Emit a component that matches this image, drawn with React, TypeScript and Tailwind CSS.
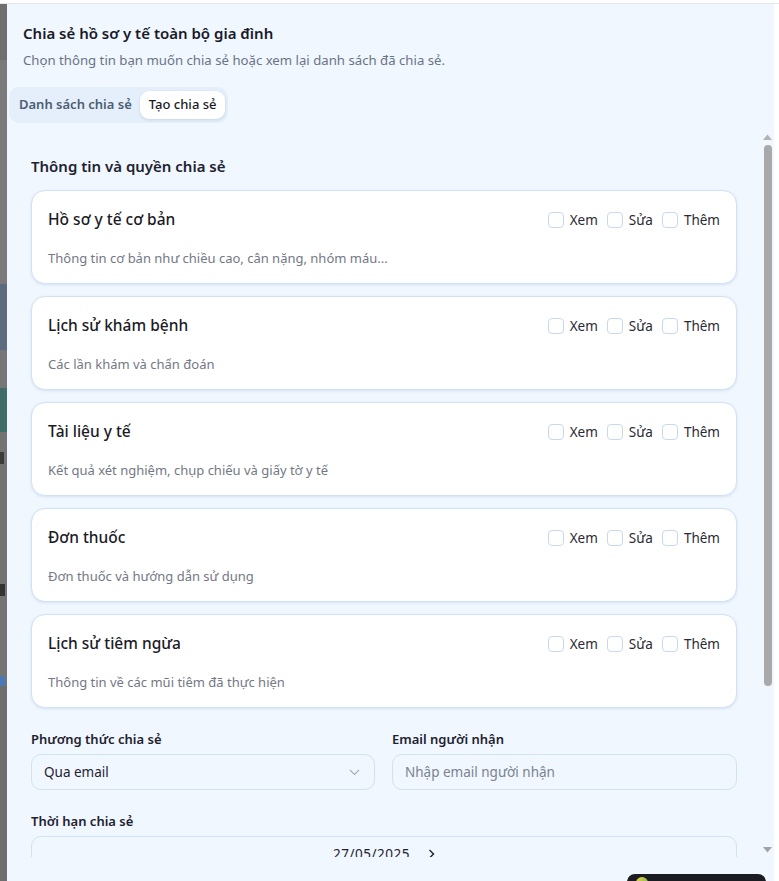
import React from 'react';

const sections = [
  { title: 'Hồ sơ y tế cơ bản', desc: 'Thông tin cơ bản như chiều cao, cân nặng, nhóm máu...' },
  { title: 'Lịch sử khám bệnh', desc: 'Các lần khám và chẩn đoán' },
  { title: 'Tài liệu y tế', desc: 'Kết quả xét nghiệm, chụp chiếu và giấy tờ y tế' },
  { title: 'Đơn thuốc', desc: 'Đơn thuốc và hướng dẫn sử dụng' },
  { title: 'Lịch sử tiêm ngừa', desc: 'Thông tin về các mũi tiêm đã thực hiện' },
];

const Check: React.FC<{ label: string }> = ({ label }) => (
  <label className="flex items-center gap-[6px] text-[13.5px] text-[#2a2a35]">
    <span className="block w-[16px] h-[16px] rounded-[4px] border border-[#c6d9ee] bg-white" />
    {label}
  </label>
);

const SectionCard: React.FC<{ title: string; desc: string }> = ({ title, desc }) => (
  <div className="bg-white border border-[#cfe2f6] rounded-[14px] shadow-[0_1px_3px_rgba(30,80,140,0.12)] px-4 pt-[16px] pb-[15px]">
    <div className="flex items-center justify-between h-[26px]">
      <span className="text-[15.5px] font-medium text-[#1b1b26]">{title}</span>
      <div className="flex items-center gap-[9px]">
        <Check label="Xem" />
        <Check label="Sửa" />
        <Check label="Thêm" />
      </div>
    </div>
    <p className="mt-[15px] text-[13px] leading-[20px] text-[#737885]">{desc}</p>
  </div>
);

const App: React.FC = () => {
  return (
    <div
      className="relative w-[779px] h-[881px] bg-white overflow-hidden"
      style={{ fontFamily: '"Noto Sans", "Open Sans", sans-serif' }}
    >
      <div className="h-[3px]" />
      <div className="border-t border-[#e4e6ea]" />
      <div className="flex h-[877px]">
        {/* page behind the overlay */}
        <div className="w-[7px] flex flex-col bg-[#747474]">
          <div className="h-[56px] bg-[#6f6f6f]" />
          <div className="h-[224px] bg-[#7a7a7a]" />
          <div className="h-[66px] bg-[#5d6b7e]" />
          <div className="h-[38px] bg-[#767676]" />
          <div className="h-[44px] bg-[#3f6e66]" />
          <div className="h-[20px] bg-[#737373]" />
          <div className="h-[12px] bg-[#3a3a3a] w-[4px]" />
          <div className="h-[120px] bg-[#727272]" />
          <div className="h-[12px] bg-[#333] w-[5px]" />
          <div className="h-[80px] bg-[#747474]" />
          <div className="h-[10px] bg-[#4a78b8] w-[5px]" />
          <div className="flex-1 bg-[#6e6e6e]" />
        </div>

        {/* dialog panel */}
        <div className="w-[767px] bg-[#f0f7ff] flex flex-col">
          <div className="px-4 pt-[17px]">
            <h2 className="text-[15px] leading-[24px] font-semibold text-[#1a1a28]">
              Chia sẻ hồ sơ y tế toàn bộ gia đình
            </h2>
            <p className="mt-[5px] text-[13.2px] leading-[20px] text-[#697487]">
              Chọn thông tin bạn muốn chia sẻ hoặc xem lại danh sách đã chia sẻ.
            </p>
            <div className="mt-[17px] -ml-[14px] inline-flex items-center h-[36px] bg-[#e4effb] rounded-[10px] pl-[10px] pr-[3px] gap-[8px]">
              <span className="text-[13px] font-semibold text-[#4d5d73]">Danh sách chia sẻ</span>
              <span className="h-[28px] px-[9px] flex items-center bg-white rounded-[9px] shadow-[0_1px_3px_rgba(30,60,110,0.15)] text-[13px] font-medium text-[#1a1a28]">
                Tạo chia sẻ
              </span>
            </div>
          </div>

          <div className="mt-[8px] flex h-[726px]">
            <div className="w-[754px] overflow-hidden px-6 pt-[24px]">
              <h3 className="text-[15px] leading-[22px] font-semibold text-[#1f2230]">Thông tin và quyền chia sẻ</h3>
              <div className="mt-[13px] flex flex-col gap-[12px]">
                {sections.map((s) => (
                  <SectionCard key={s.title} title={s.title} desc={s.desc} />
                ))}
              </div>

              <div className="mt-[22px] grid grid-cols-[344px_345px] gap-x-[17px]">
                <div>
                  <div className="text-[13px] leading-[18px] font-semibold text-[#1f2230]">Phương thức chia sẻ</div>
                  <div className="mt-[6px] h-[36px] rounded-[10px] border border-[#cfe2f6] bg-[#f0f7ff] flex items-center justify-between pl-[12px] pr-[14px]">
                    <span className="text-[13.5px] text-[#1f2230]">Qua email</span>
                    <svg width="11" height="7" viewBox="0 0 11 7" fill="none">
                      <path d="M1 1l4.5 4.5L10 1" stroke="#a9b0ba" strokeWidth="1.2" />
                    </svg>
                  </div>
                </div>
                <div>
                  <div className="text-[13px] leading-[18px] font-semibold text-[#1f2230]">Email người nhận</div>
                  <div className="mt-[6px] h-[36px] rounded-[10px] border border-[#cfe2f6] bg-[#f0f7ff] flex items-center pl-[12px]">
                    <span className="text-[13.5px] text-[#7b8290]">Nhập email người nhận</span>
                  </div>
                </div>
              </div>

              <div className="mt-[22px]">
                <div className="text-[13px] leading-[18px] font-semibold text-[#1f2230]">Thời hạn chia sẻ</div>
                <div className="mt-[6px] h-[36px] rounded-[10px] border border-[#cfe2f6] bg-[#f0f7ff] flex items-center justify-center gap-[18px]">
                  <span className="text-[13.5px] text-[#1f2230] tracking-[0.5px]">27/05/2025</span>
                  <svg width="7" height="10" viewBox="0 0 7 10" fill="none">
                    <path d="M1.5 1l4 4-4 4" stroke="#2a2a35" strokeWidth="1.5" />
                  </svg>
                </div>
              </div>
            </div>

            {/* scrollbar */}
            <div className="w-[13px] flex flex-col items-center pt-[3px] pb-[4px]">
              <svg width="9" height="6" viewBox="0 0 9 6">
                <path d="M0 6L4.5 0.5L9 6z" fill="#b3b3b3" />
              </svg>
              <div className="mt-[5px] w-[8px] h-[541px] rounded-full bg-[#a9a9a9]" />
              <div className="flex-1" />
              <svg width="9" height="6" viewBox="0 0 9 6">
                <path d="M0 0L4.5 5.5L9 0z" fill="#a3a3a3" />
              </svg>
            </div>
          </div>
        </div>
      </div>

      {/* floating widget at the bottom edge */}
      <div className="absolute left-[627px] top-[874px] w-[139px] h-[20px] rounded-t-[8px] bg-[#1b1c21] px-[9px] pt-[3px]">
        <div className="w-[12px] h-[12px] rounded-full bg-[linear-gradient(135deg,#f5d142,#5cb85c)]" />
      </div>
    </div>
  );
};

export default App;
